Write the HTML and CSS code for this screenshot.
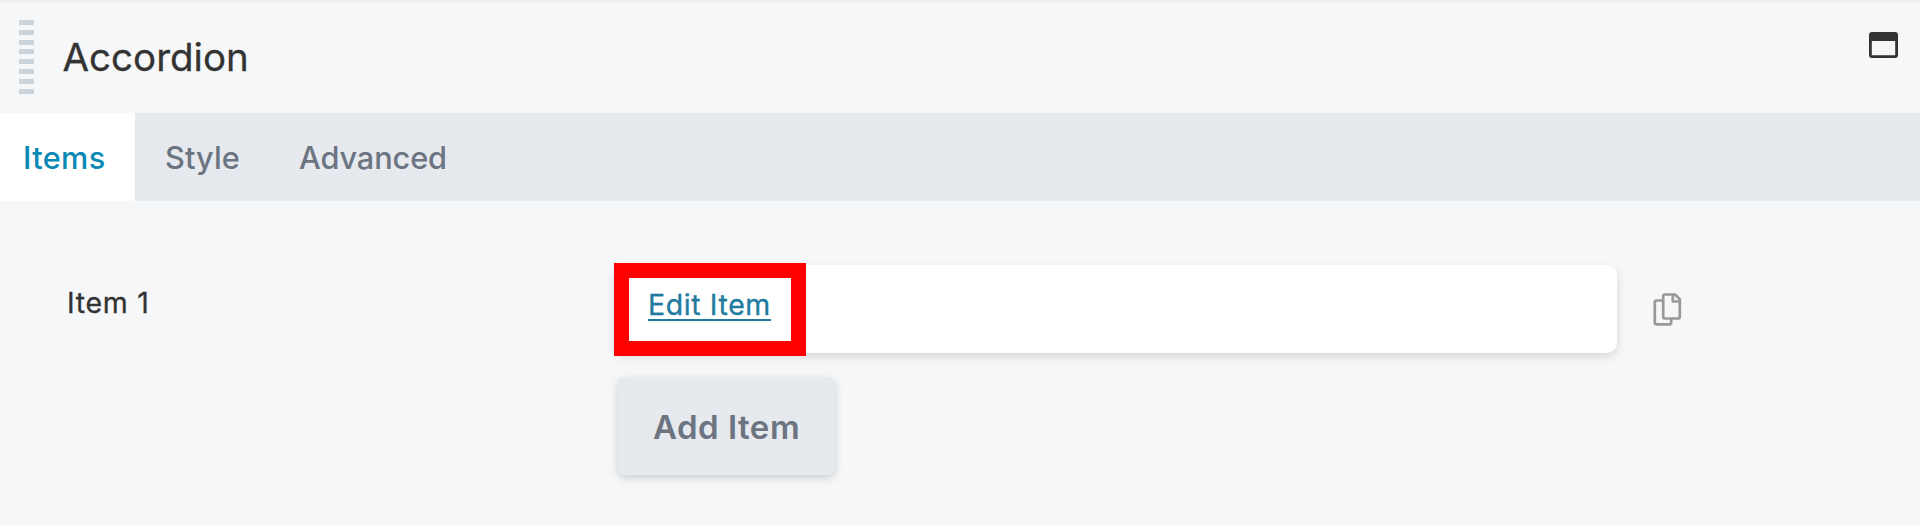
FILE: index.html
```html
<!DOCTYPE html>
<html lang="en">
<head>
<meta charset="utf-8">
<title>Accordion</title>
<link rel="stylesheet" href="styles.css">
</head>
<body>
<section class="panel">
  <header class="panel-header">
    <div class="grip"></div>
    <h1 class="title">Accordion</h1>
    <svg class="window-icon" width="29" height="26" viewBox="0 0 29 26">
      <path fill="#333" fill-rule="evenodd" d="M3 0H26Q29 0 29 3V23Q29 26 26 26H3Q0 26 0 23V3Q0 0 3 0ZM2.800 9V23.200H26.200V9Z"/>
    </svg>
  </header>
  <nav class="tabs">
    <a class="tab tab-items active">Items</a>
    <a class="tab tab-style">Style</a>
    <a class="tab tab-advanced">Advanced</a>
  </nav>
  <main class="content">
    <div class="item-row">
      <span class="item-label">Item 1</span>
      <div class="field">
        <a class="edit-link">Edit Item</a>
        <div class="highlight"></div>
      </div>
      <svg class="copy-icon" width="30" height="34" viewBox="0 0 30 34" fill="none" stroke="#999" stroke-width="2.700" stroke-linejoin="round">
        <path d="M9.500 7.500H3.600Q1.800 7.500 1.800 9.300V29.500Q1.800 31.300 3.600 31.300H16.400Q18.200 31.300 18.200 29.500V26"/>
        <path d="M12 1.500H22L26.800 6.300V23.700Q26.800 25.500 25 25.500H12Q10.200 25.500 10.200 23.700V3.300Q10.200 1.500 12 1.500Z"/>
        <path d="M19.800 1.500V8.500H26.500"/>
      </svg>
    </div>
    <button class="add-button">Add Item</button>
  </main>
</section>
</body>
</html>
```
FILE: styles.css
```css
* { box-sizing: border-box; }
body {
  margin: 0;
  background: #f5f7f9;
  font-family: Inter, "Liberation Sans", sans-serif;
  color: #333;
}
.panel { height: 525px; border-top: 3px solid #f0f1f2; overflow: hidden; }
.panel-header { display: flex; align-items: flex-start; height: 110px; padding: 17px 22px 0 18.500px; }
.grip {
  width: 15px;
  height: 74px;
  background: repeating-linear-gradient(#cbd3db 0 5px, transparent 5px 9.830px);
}
.title { margin: 13px 0 0 29px; font-size: 38.500px; line-height: 48px; font-weight: 400; -webkit-text-stroke: .3px currentColor; }
.window-icon { margin: 12px 0 0 auto; }
.tabs { display: flex; height: 88px; background: #e6e9ee; }
.tab { font-size: 30.700px; line-height: 90px; font-weight: 500; color: #6b7480; white-space: nowrap; }
.tab-items { width: 135px; padding-left: 23px; letter-spacing: .35px; }
.tab-style { width: 134px; padding-left: 30px; letter-spacing: .1px; }
.tab-advanced { padding-left: 30px; letter-spacing: -.1px; }
.active { background: #fff; color: #0a89b5; }
.content { padding-top: 64px; }
.item-row { display: flex; height: 88px; padding-left: 67px; }
.item-label { width: 547px; font-size: 28.500px; line-height: 76px; letter-spacing: .7px; -webkit-text-stroke: .3px currentColor; }
.field {
  position: relative;
  width: 1003px;
  padding-left: 34px;
  border-radius: 10px;
  background: #fff;
  box-shadow: 0 4px 10px rgba(0, 0, 0, .13);
}
.edit-link {
  display: inline-block;
  margin-top: 22px;
  height: 34px;
  background: linear-gradient(#207ba0, #207ba0) 0 100% / 100% 2px no-repeat;
  color: #207ba0;
  font-size: 28.500px;
  line-height: 35px;
  letter-spacing: .6px;
  -webkit-text-stroke: .3px currentColor;
  white-space: nowrap;
}
.highlight { position: absolute; left: 0; top: -2px; width: 192px; height: 93px; border: 15px solid #f00; }
.copy-icon { margin: 28px 0 0 36px; }
.add-button {
  display: block;
  width: 217px;
  height: 98px;
  margin: 24px 0 0 618px;
  padding: 2px 0 0;
  border: 0;
  border-radius: 7px;
  background: #e6e9ee;
  box-shadow: 0 3px 8px rgba(0, 0, 0, .17);
  color: #6b7480;
  font-family: inherit;
  font-size: 33px;
  font-weight: 600;
  letter-spacing: .5px;
  white-space: nowrap;
}
```
